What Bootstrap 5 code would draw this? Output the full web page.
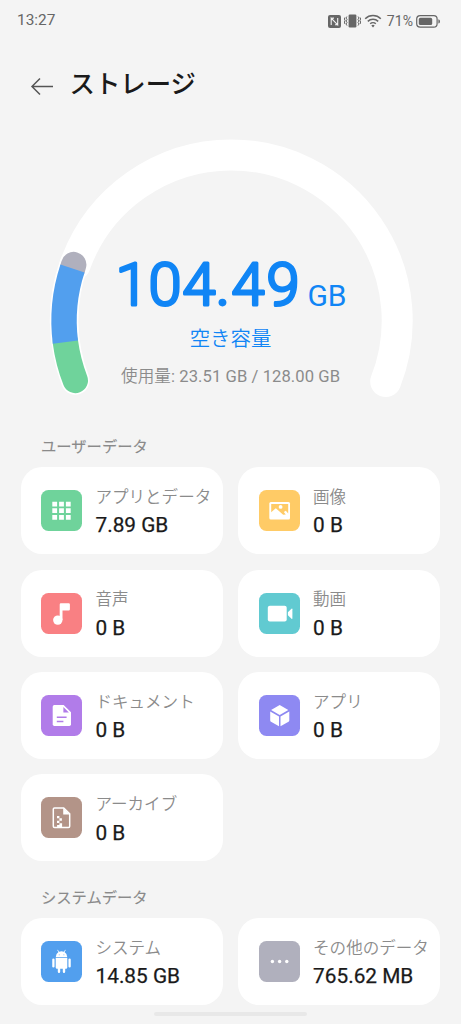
<!DOCTYPE html>
<html lang="ja">
<head>
<meta charset="utf-8">
<meta name="viewport" content="width=device-width, initial-scale=1">
<title>ストレージ</title>
<link href="https://cdn.jsdelivr.net/npm/bootstrap@5.3.0/dist/css/bootstrap.min.css" rel="stylesheet">
<style>
body{background:#f4f4f4;font-family:Roboto,"Noto Sans CJK JP",sans-serif;color:#1a1a1a}
.screen{width:461px;height:1024px;overflow:hidden}
.statusbar{height:42px;padding:0 20px 0 17px;color:#666;font-size:15.4px}
.status-icons{gap:3px}
.pct{font-size:14px;letter-spacing:.1px;margin-left:2px}
.titlebar{height:83px;padding-left:30px;gap:15.5px}
.titlebar h1{font-size:25.4px;font-weight:500;line-height:38px}
.gauge-box{height:285px}
.section-title{font-size:15.3px;font-weight:400;-webkit-text-stroke:.1px #8a8a8a;line-height:22px;color:#8a8a8a;padding-left:41px}
.tiles{display:grid;grid-template-columns:202.3px 202.3px;column-gap:15.3px;row-gap:15.5px;padding-left:20.5px}
.tile{height:86.9px;border-radius:21px;padding-left:20.5px;gap:13.5px}
.tile-icon{width:41px;height:41px;border-radius:7.5px}
.tile-label{font-size:16.55px;line-height:24px;color:#8b8b8b;font-weight:350;white-space:nowrap;margin-top:2px}
.tile-value{font-size:20.8px;line-height:24px;font-weight:400;-webkit-text-stroke:.25px #1a1a1a;margin-top:3.4px;white-space:nowrap}
.homebar{width:153px;height:4px;background:#e8e8e8;border-radius:2px;margin-top:7px}
</style>
</head>
<body>
<main class="screen d-flex flex-column">
  <div class="statusbar d-flex align-items-center justify-content-between flex-shrink-0">
    <span>13:27</span>
    <div class="status-icons d-flex align-items-center">
      <svg width="13" height="13" viewBox="0 0 13 13"><rect width="13" height="13" rx="2" fill="#666"/><path d="M3.2 10V3.2L9.7 9.8V3M3.2 3.2 6 3.1M9.7 9.8H7" fill="none" stroke="#f4f4f4" stroke-width="1.1"/></svg>
      <svg width="17" height="14" viewBox="0 0 17 14"><rect x="4.6" y=".5" width="7.8" height="13" rx="1.2" fill="#666"/><path d="M2.9 2.5 2 4l1 1.5L2 7l1 1.5L2 10l1 1.6M.8 3.5 0.4 5l.6 1.5L.4 8l.5 2M14.1 2.5 15 4l-1 1.5L15 7l-1 1.5 1 1.5-1 1.6M16.2 3.5l.4 1.5-.6 1.5.6 1.5-.5 2" fill="none" stroke="#666"/></svg>
      <svg width="18" height="14" viewBox="0 0 18 14"><path d="M1.2 4.8a11 11 0 0 1 15.6 0M3.8 7.4a7.4 7.4 0 0 1 10.4 0M6.2 9.8a4 4 0 0 1 5.6 0" fill="none" stroke="#666" stroke-width="1.5"/><path d="M9 13.4 7.3 11.6a2.5 2.5 0 0 1 3.4 0z" fill="#666"/></svg>
      <span class="pct">71%</span>
      <svg width="25" height="13" viewBox="0 0 25 13"><rect x=".7" y=".7" width="20.4" height="11.4" rx="3.4" fill="none" stroke="#666" stroke-width="1.2"/><rect x="2.8" y="2.8" width="13.4" height="7.2" rx="1.6" fill="#666"/><path d="M22.4 4.3q1.6.4 1.6 2.1t-1.6 2.1z" fill="#666"/></svg>
    </div>
  </div>

  <header class="titlebar d-flex align-items-center flex-shrink-0">
    <svg class="mt-1" width="24" height="20" viewBox="0 0 24 20"><path d="M10 2.5 2 10.5l8 8M2 10.5h21" fill="none" stroke="#555" stroke-width="1.5"/></svg>
    <h1 class="m-0">ストレージ</h1>
  </header>

  <section class="gauge-box flex-shrink-0">
    <svg width="461" height="285" viewBox="0 125 461 285" class="d-block">
      <g fill="none">
        <path d="M75.3 380.5A167.2 167.2 0 0 1 73.7 264.5" stroke="#fff" stroke-width="28.6" stroke-linecap="round"/>
        <path d="M75.1 264.8A165.9 165.9 0 0 1 231.3 154.9A165.9 165.9 0 0 1 385.7 381.5" stroke="#fff" stroke-width="31" stroke-linecap="round"/>
        <path d="M72.6 268.5 73.7 264.6" stroke="#b0b0bd" stroke-width="25.4" stroke-linecap="round"/>
        <path d="M65.4 342A167.2 167.2 0 0 0 75.3 380.5" stroke="#6fd39b" stroke-width="25.4" stroke-linecap="round"/>
        <path d="M65.4 342.2A167.2 167.2 0 0 1 72.5 268.6" stroke="#529fee" stroke-width="25.4"/>
      </g>
      <g fill="#1085f5" text-anchor="middle">
        <text x="132 165 199 222.8 248 283" y="305.4" font-size="59.6" font-weight="300" stroke="#1085f5" stroke-width="3" stroke-linejoin="round">104.49</text>
        <text x="327" y="306" font-size="30">GB</text>
        <text x="230.5" y="345.5" font-size="20.4" font-weight="350">空き容量</text>
      </g>
      <text x="230.5" y="381.5" font-size="16.6" fill="#8b8b8b" text-anchor="middle" textLength="219"><tspan font-weight="350">使用量</tspan>: 23.51 GB / 128.00 GB</text>
    </svg>
  </section>

  <h2 class="section-title mb-0" style="margin-top:26.4px">ユーザーデータ</h2>
  <section class="tiles" style="margin-top:8.9px">
    <div class="tile bg-white d-flex align-items-center">
      <svg class="tile-icon" viewBox="0 0 41 41" style="background:#6fd39b"><path d="M11.3 11.7h4.8v4.8h-4.8zM18.1 11.7h4.8v4.8h-4.8zM24.9 11.7h4.8v4.8h-4.8zM11.3 18.3h4.8v4.8h-4.8zM18.1 18.3h4.8v4.8h-4.8zM24.9 18.3h4.8v4.8h-4.8zM11.3 25h4.8v4.8h-4.8zM18.1 25h4.8v4.8h-4.8zM24.9 25h4.8v4.8h-4.8z" fill="#fff"/></svg>
      <div><div class="tile-label">アプリとデータ</div><div class="tile-value">7.89 GB</div></div>
    </div>
    <div class="tile bg-white d-flex align-items-center">
      <svg class="tile-icon" viewBox="0 0 41 41" style="background:#ffcb66"><rect x="10.3" y="12" width="20.7" height="17.6" rx="1.5" fill="#fff"/><path d="M12.2 14H29.2v9.4l-2.4-2.6-2 1.2 2 2.6-2.6.2-7.4-6.6-4.6 4z" fill="#ffcb66"/><circle cx="21.6" cy="16.9" r="1.9" fill="#fff"/></svg>
      <div><div class="tile-label">画像</div><div class="tile-value">0 B</div></div>
    </div>
    <div class="tile bg-white d-flex align-items-center">
      <svg class="tile-icon" viewBox="0 0 41 41" style="background:#f98083"><circle cx="16.8" cy="27.1" r="4.7" fill="#fff"/><path d="M18.7 27V11.5q0-1.2 1.2-1.2h7.8q1.2 0 1.2 1.2v4.7q0 1.2-1.2 1.2h-6.2V27z" fill="#fff"/></svg>
      <div><div class="tile-label">音声</div><div class="tile-value">0 B</div></div>
    </div>
    <div class="tile bg-white d-flex align-items-center">
      <svg class="tile-icon" viewBox="0 0 41 41" style="background:#61cad1"><rect x="8.8" y="12.8" width="18.9" height="15.8" rx="2" fill="#fff"/><path d="M28.9 19.2 32.5 15.8q.9-.6.9.5v8.9q0 1.1-.9.5l-3.6-3.4z" fill="#fff"/></svg>
      <div><div class="tile-label">動画</div><div class="tile-value">0 B</div></div>
    </div>
    <div class="tile bg-white d-flex align-items-center">
      <svg class="tile-icon" viewBox="0 0 41 41" style="background:#b17ce9"><path d="M13.4 10h9.3l7.3 7.3v12q0 1.7-1.7 1.7H13.4q-1.7 0-1.7-1.7V11.7q0-1.7 1.7-1.7z" fill="#fff"/><path d="M22.4 12v5.5h5.5z" fill="#b17ce9"/><path d="M15.8 22.3h9.8M15.8 26.5h6.6" stroke="#b17ce9" stroke-width="1.5"/></svg>
      <div><div class="tile-label">ドキュメント</div><div class="tile-value">0 B</div></div>
    </div>
    <div class="tile bg-white d-flex align-items-center">
      <svg class="tile-icon" viewBox="0 0 41 41" style="background:#8e89f2"><path d="m20.7 10 8.6 4.9-8.6 5-8.6-5zM11.2 16.5l8.8 5.1v9.6l-8-4.5q-.8-.5-.8-1.5zM30.3 16.5l-8.8 5.1v9.6l8-4.5q.8-.5.8-1.5z" fill="#fff"/></svg>
      <div><div class="tile-label">アプリ</div><div class="tile-value">0 B</div></div>
    </div>
    <div class="tile bg-white d-flex align-items-center">
      <svg class="tile-icon" viewBox="0 0 41 41" style="background:#b39488"><path d="M13.5 10.9h9.2l6 6v12.4q0 1.2-1.2 1.2h-14q-1.2 0-1.2-1.2V12.1q0-1.2 1.2-1.2z" fill="none" stroke="#fff" stroke-width="1.5"/><path d="M22.2 11v6.4h6.5zM16 19h2.4v2.3H16zM18.4 21.3h2.5v2.4h-2.5zM16 23.7h2.4v2.4H16zM18.4 26.2h2.7v4.2h-5V28h2.3z" fill="#fff"/></svg>
      <div><div class="tile-label">アーカイブ</div><div class="tile-value">0 B</div></div>
    </div>
  </section>

  <h2 class="section-title mb-0" style="margin-top:25.5px">システムデータ</h2>
  <section class="tiles" style="margin-top:9px">
    <div class="tile bg-white d-flex align-items-center">
      <svg class="tile-icon" viewBox="0 0 41 41" style="background:#529fee"><path d="M14.7 16.3q.1-3.5 2.8-5.2l-1.3-2 .6-.4 1.4 2q2.3-.9 4.6 0l1.4-2 .6.4-1.3 2q2.7 1.7 2.8 5.2zM14.7 17.1h11.6v9.3q0 1.3-1.3 1.3h-.8v3q0 1.2-1.2 1.2t-1.2-1.2v-3h-2.6v3q0 1.2-1.2 1.2t-1.2-1.2v-3H16q-1.3 0-1.3-1.3z" fill="#fff"/><path d="M12.4 18.6v6.8M28.6 18.6v6.8" stroke="#fff" stroke-width="2.3" stroke-linecap="round"/><path d="M17.8 13.8h.8M22.5 13.8h.8" stroke="#529fee" stroke-width=".8"/></svg>
      <div><div class="tile-label">システム</div><div class="tile-value">14.85 GB</div></div>
    </div>
    <div class="tile bg-white d-flex align-items-center">
      <svg class="tile-icon" viewBox="0 0 41 41" style="background:#b0b0bd"><g fill="#fff"><circle cx="13.4" cy="20.5" r="1.7"/><circle cx="20.6" cy="20.5" r="1.7"/><circle cx="27.8" cy="20.5" r="1.7"/></g></svg>
      <div><div class="tile-label">その他のデータ</div><div class="tile-value">765.62 MB</div></div>
    </div>
  </section>
  <div class="homebar mx-auto flex-shrink-0"></div>
</main>
<script src="https://cdn.jsdelivr.net/npm/bootstrap@5.3.0/dist/js/bootstrap.bundle.min.js"></script>
</body>
</html>
